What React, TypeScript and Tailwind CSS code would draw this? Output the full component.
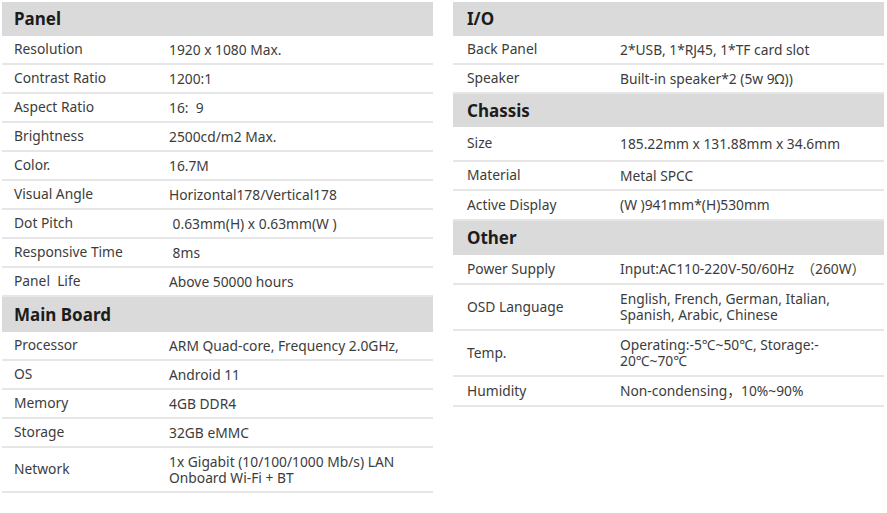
const left = [
  {
    title: "Panel",
    hh: "h-[34px]",
    rows: [
      { label: "Resolution", value: "1920 x 1080 Max." },
      { label: "Contrast Ratio", value: "1200:1" },
      { label: "Aspect Ratio", value: "16:  9" },
      { label: "Brightness", value: "2500cd/m2 Max." },
      { label: "Color.", value: "16.7M" },
      { label: "Visual Angle", value: "Horizontal178/Vertical178" },
      { label: "Dot Pitch", value: " 0.63mm(H) x 0.63mm(W )" },
      { label: "Responsive Time", value: " 8ms" },
      { label: "Panel  Life", value: "Above 50000 hours" },
    ],
  },
  {
    title: "Main Board",
    hh: "h-[35px]",
    rows: [
      { label: "Processor", value: "ARM Quad-core, Frequency 2.0GHz," },
      { label: "OS", value: "Android 11" },
      { label: "Memory", value: "4GB DDR4" },
      { label: "Storage", value: "32GB eMMC" },
      { label: "Network", value: "1x Gigabit (10/100/1000 Mb/s) LAN\nOnboard Wi-Fi + BT", h: "h-[45px]" },
    ],
  },
];

const right = [
  {
    title: "I/O",
    hh: "h-[34px]",
    rows: [
      { label: "Back Panel", value: "2*USB, 1*RJ45, 1*TF card slot" },
      { label: "Speaker", value: "Built-in speaker*2 (5w 9Ω))" },
    ],
  },
  {
    title: "Chassis",
    hh: "h-[33px]",
    rows: [
      { label: "Size", value: "185.22mm x 131.88mm x 34.6mm", h: "h-[35px]" },
      { label: "Material", value: "Metal SPCC" },
      { label: "Active Display", value: "(W )941mm*(H)530mm", h: "h-[30px]" },
    ],
  },
  {
    title: "Other",
    hh: "h-[34px]",
    rows: [
      { label: "Power Supply", value: "Input:AC110-220V-50/60Hz  （260W）", h: "h-[30px]" },
      { label: "OSD Language", value: "English, French, German, Italian,\nSpanish, Arabic, Chinese", h: "h-[46px]" },
      { label: "Temp.", value: "Operating:-5℃~50℃, Storage:-\n20℃~70℃", h: "h-[46px]" },
      { label: "Humidity", value: "Non-condensing，10%~90%", h: "h-[30px]" },
    ],
  },
];

type Section = { title: string; hh: string; rows: { label: string; value: string; h?: string }[] };

function SpecColumn({ sections, pad, labelW }: { sections: Section[]; pad: string; labelW: string }) {
  return (
    <div className="w-[431px] flex flex-col">
      {sections.map((s) => (
        <div key={s.title}>
          <div className={`${s.hh} bg-[#dadada] flex items-center ${pad}`}>
            <span className="text-[17px] font-bold text-[#1c1c1c]">{s.title}</span>
          </div>
          {s.rows.map((r) => (
            <div
              key={r.label}
              className={`${r.h ?? "h-[29px]"} flex items-center border-b-2 border-[#e6e6e6] text-[13.8px] text-[#3c3c3c] ${pad}`}
            >
              <span className={`${labelW} shrink-0 whitespace-pre`}>{r.label}</span>
              <span className="whitespace-pre leading-[16px]">{r.value}</span>
            </div>
          ))}
        </div>
      ))}
    </div>
  );
}

export default function App() {
  return (
    <div
      className="w-[887px] h-[513px] bg-white flex gap-[20px] pl-[2px] pt-[2px]"
      style={{ fontFamily: '"Noto Sans", "Noto Sans CJK SC", sans-serif' }}
    >
      <SpecColumn sections={left} pad="pl-[12px]" labelW="w-[155px]" />
      <SpecColumn sections={right} pad="pl-[14px]" labelW="w-[153px]" />
    </div>
  );
}
